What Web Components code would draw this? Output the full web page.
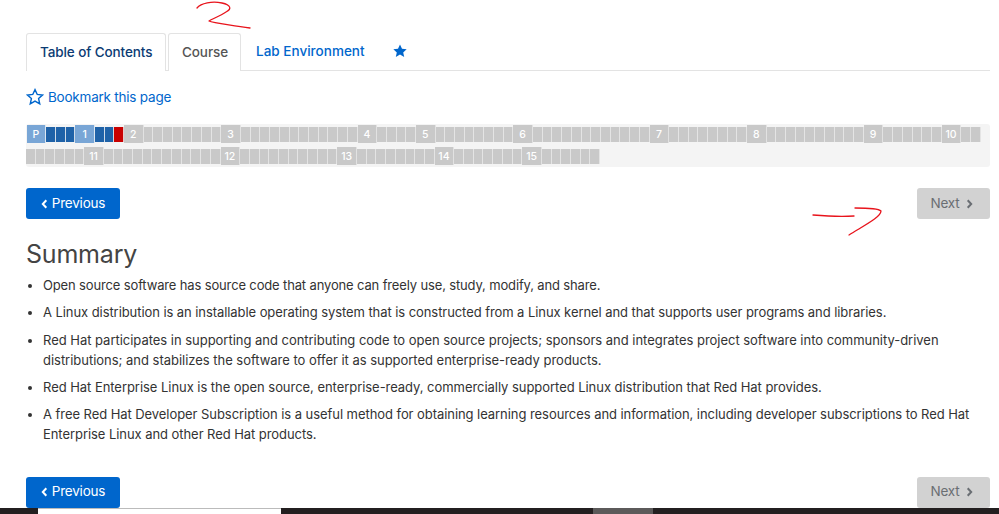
<!DOCTYPE html>
<html lang="en"><head><meta charset="utf-8"><title>Summary</title>
<style>
html,body{margin:0;padding:0;background:#fff;width:999px;height:514px;overflow:hidden}
body{font-family:Inter,"Open Sans",sans-serif;color:#333}
</style></head><body>
<course-page>
  <course-tabs>
    <course-tab active>Table of Contents</course-tab>
    <course-tab boxed>Course</course-tab>
    <course-tab link>Lab Environment</course-tab>
    <course-tab star></course-tab>
  </course-tabs>
  <bookmark-link>Bookmark this page</bookmark-link>
  <progress-map spec="P:p b b b 1:p b b r 2 s8 3 s12 4 s4 5 s8 6 s12 7 s8 8 s10 9 s6 10 s2|s6 11 s12 12 s10 13 s8 14 s7 15 s6"></progress-map>
  <nav-row style="margin-top:21px"></nav-row>
  <summary-section>
    <li style="letter-spacing:-.145px">Open source software has source code that anyone can freely use, study, modify, and share.</li>
    <li style="letter-spacing:-.072px">A Linux distribution is an installable operating system that is constructed from a Linux kernel and that supports user programs and libraries.</li>
    <li style="letter-spacing:-.025px">Red Hat participates in supporting and contributing code to open source projects; sponsors and integrates project software into community-driven distributions; and stabilizes the software to offer it as supported enterprise-ready products.</li>
    <li style="letter-spacing:-.045px">Red Hat Enterprise Linux is the open source, enterprise-ready, commercially supported Linux distribution that Red Hat provides.</li>
    <li style="letter-spacing:-.06px">A free Red Hat Developer Subscription is a useful method for obtaining learning resources and information, including developer subscriptions to Red Hat Enterprise Linux and other Red Hat products.</li>
  </summary-section>
  <nav-row style="margin-top:25.5px"></nav-row>
  <task-bar></task-bar>
  <red-scribbles></red-scribbles>
</course-page>
<script>
function def(name, html, init){
  customElements.define(name, class extends HTMLElement{
    constructor(){super();this.attachShadow({mode:'open'}).innerHTML=html;}
    connectedCallback(){if(init)init(this);}
  });
}
const STAR='M12 2.2l3 6.4 7 .8-5.2 4.7 1.5 6.9L12 17.4l-6.3 3.6 1.5-6.9L2 9.4l7-.8z';
def('course-page',`<style>:host{display:flex;flex-direction:column;position:relative;width:999px;height:514px;box-sizing:border-box;padding:33px 9px 0 26px;overflow:hidden}</style><slot></slot>`);
def('course-tabs',`<style>:host{display:flex;gap:2px;height:38px;box-sizing:border-box;border-bottom:1px solid #e3e3e3;flex:none}</style><slot></slot>`);
def('course-tab',`<style>
:host{display:block;box-sizing:border-box;height:38px;padding:0 13px;font:500 13.5px/36px Inter,sans-serif;color:#06c;white-space:nowrap;letter-spacing:-.1px}
:host([link]){letter-spacing:.02px}
:host([active]),:host([boxed]){border:1px solid #e3e3e3;border-bottom:0;border-radius:3px 3px 0 0;background:#fff;padding:0 13px}
:host([active]){color:#0b3b73;width:140px}
:host([boxed]){color:#555;width:73px}
:host([star]){padding:0 0 0 12px;display:flex;align-items:center}
svg{display:block;margin-top:-3px}
</style><slot></slot><span id="s"></span>`,el=>{
  if(el.hasAttribute('star'))el.shadowRoot.getElementById('s').innerHTML=`<svg width="16" height="16" viewBox="0 0 24 24"><path d="${STAR}" fill="#06c"/></svg>`;
});
def('bookmark-link',`<style>
:host{display:flex;align-items:center;gap:4px;height:20px;margin-top:16px;color:#06c;font:400 13.5px/20px Inter,sans-serif;letter-spacing:-.22px;flex:none}
svg{display:block;margin-top:-1px}
</style><svg width="18" height="18" viewBox="0 0 24 24"><path d="${STAR}" fill="none" stroke="#06c" stroke-width="1.9"/></svg><slot></slot>`);
def('progress-map',`<style>
:host{display:block;flex:none;margin-top:17px;height:43px;box-sizing:border-box;background:#f4f4f4;border-radius:3px;padding:1px 0 0 .7px}
#w{display:flex;flex-direction:column;gap:3.6px}
.row{display:flex;align-items:center}
.row+.row{margin-left:-.8px}
.c{width:9.74px;height:15px;box-sizing:border-box;flex:none;border-right:1px solid #e4e4e4;background:#c9c9c9}
.c.b{background:#1f62a8;border-right-color:#cfdbe8}
.c.r{background:#c90000;border-right-color:#e8c9c9}
.l{width:19.48px;height:18.4px;box-sizing:border-box;flex:none;background:#c9c9c9;border-right:1px solid #e2e2e2;color:#fff;font:500 10.5px/19.6px Inter,sans-serif;text-align:center}
.l.p{background:#79a6d6;border-right-color:#dce7f2}
</style><div id="w"></div>`,el=>{
  let out='';
  for(const line of el.getAttribute('spec').split('|')){
    let h='';
    for(const t of line.split(' ')){
      if(t==='b'||t==='r')h+=`<div class="c ${t}"></div>`;
      else if(/^s\d+$/.test(t))h+='<div class="c"></div>'.repeat(+t.slice(1));
      else{const[a,b]=t.split(':');h+=`<div class="l ${b||''}">${a}</div>`;}
    }
    out+=`<div class="row">${h}</div>`;
  }
  el.shadowRoot.getElementById('w').innerHTML=out;
});
const CL='<svg width="7" height="10" viewBox="0 0 7 10" style="display:block;margin-top:2px"><path d="M5.3 1.2 1.8 5l3.5 3.8" fill="none" stroke="currentColor" stroke-width="2"/></svg>';
const CR='<svg width="7" height="10" viewBox="0 0 7 10" style="display:block;margin-top:2px"><path d="M1.7 1.2 5.2 5 1.7 8.8" fill="none" stroke="currentColor" stroke-width="2"/></svg>';
def('nav-row',`<style>:host{display:flex;justify-content:space-between;flex:none}</style>
<nav-btn primary>${CL}Previous</nav-btn><nav-btn>Next${CR}</nav-btn>`);
def('nav-btn',`<style>
:host{display:flex;align-items:center;justify-content:center;box-sizing:border-box;height:31px;padding:0 4px 2px 0;border-radius:3px;font:400 13.5px/20px Inter,sans-serif;letter-spacing:-.2px;background:#d2d2d2;color:#6a6e73;width:73px;gap:6px}
:host([primary]){background:#06c;color:#fff;width:94px;gap:4px;padding:0 0 2px 0}
</style><slot></slot>`);
def('summary-section',`<style>
:host{display:block;flex:none;margin-top:19px}
h2{margin:0;font:400 25px/32px Inter,sans-serif;color:#444;letter-spacing:-.2px}
ul{margin:5px 0 0;padding:0 0 0 17px;font:400 13px/20px Inter,sans-serif;color:#333}
::slotted(li){margin-bottom:7.3px}
</style><h2>Summary</h2><ul><slot></slot></ul>`);
def('task-bar',`<style>
:host{position:absolute;left:0;right:0;bottom:0;height:6px;background:#231f20;display:block}
.w{position:absolute;left:38px;width:243px;top:0;bottom:0;background:#fff;border-top:1px solid #bbb;box-sizing:border-box}
.g{position:absolute;left:593px;width:60px;top:0;bottom:0;background:#5c5a5a}
</style><div class="w"></div><div class="g"></div>`);
def('red-scribbles',`<style>:host{position:absolute;inset:0;pointer-events:none;display:block}svg{position:absolute;left:0;top:0}</style>
<svg width="999" height="514" fill="none" stroke="#e8141c" stroke-width="1.3" stroke-linecap="round" stroke-linejoin="round">
<path d="M197 8C201 3 212 1 222 3 231 5 232 9 226 12 220 16 212 19 209 21 213 23 225 24 250 28"/>
<path d="M813 215C825 216 838 217 854 216M855 208C865 208 878 208 881 211 881 217 865 225 849 235"/>
</svg>`);
</script>
</body></html>
